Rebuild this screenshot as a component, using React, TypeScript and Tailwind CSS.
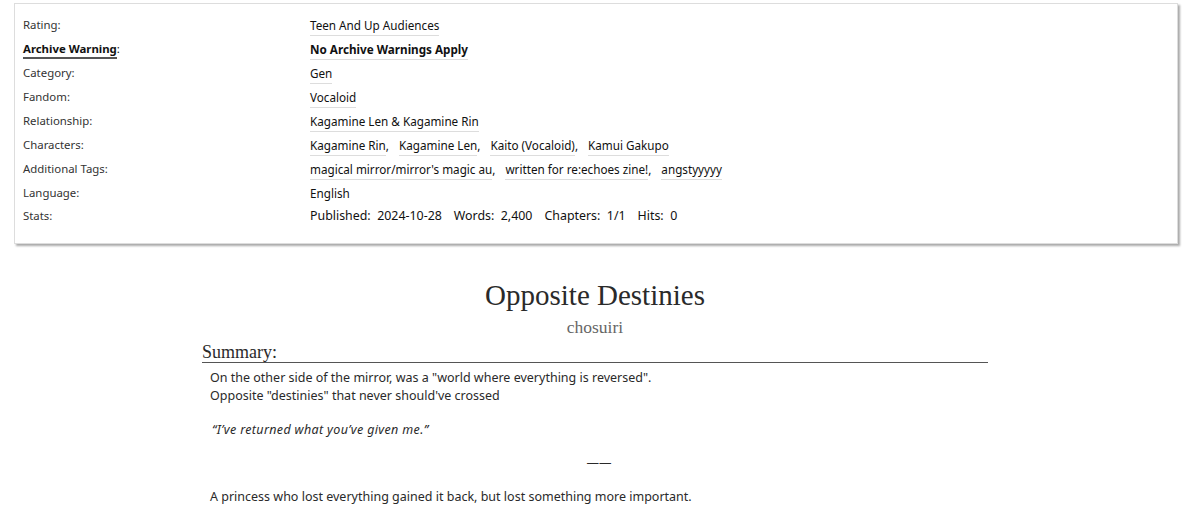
import React from 'react';

const sans = { fontFamily: '"Noto Sans", "DejaVu Sans", Verdana, sans-serif' };
const serif = { fontFamily: '"Liberation Serif", Georgia, serif' };

type Row = { label: string; values?: string[]; bold?: boolean; plain?: string };

const rows: Row[] = [
  { label: 'Rating', values: ['Teen And Up Audiences'] },
  { label: 'Archive Warning', values: ['No Archive Warnings Apply'], bold: true },
  { label: 'Category', values: ['Gen'] },
  { label: 'Fandom', values: ['Vocaloid'] },
  { label: 'Relationship', values: ['Kagamine Len & Kagamine Rin'] },
  { label: 'Characters', values: ['Kagamine Rin', 'Kagamine Len', 'Kaito (Vocaloid)', 'Kamui Gakupo'] },
  { label: 'Additional Tags', values: ["magical mirror/mirror's magic au", 'written for re:echoes zine!', 'angstyyyyy'] },
  { label: 'Language', plain: 'English' },
];

function Tag({ text, last, bold }: { text: string; last: boolean; bold?: boolean }) {
  return (
    <span className="mr-[10px] inline-block">
      <span className={`border-b border-[#ddd] pb-[2px] ${bold ? 'font-bold' : ''}`}>{text}</span>
      {!last && ','}
    </span>
  );
}

export default function App() {
  return (
    <div className="min-h-[514px] bg-white text-[#2a2a2a]" style={sans}>
      <div className="pt-[3px] pl-[14px] w-[1178px]">
        <div className="border border-[#ddd] bg-white shadow-[2px_2px_2px_#aaa] pl-[8px] pt-[12px] pb-[16px]">
          {rows.map((r) => (
            <div key={r.label} className="grid grid-cols-[287px_1fr] h-[24px] items-start text-[11.4px] leading-[18px]">
              <div className={r.bold ? 'font-bold text-[#111]' : 'text-[#333]'}>
                {r.bold ? (
                  <>
                    <span className="border-b-2 border-[#555] pb-[1px]">{r.label}</span>
                    <span className="font-normal">:</span>
                  </>
                ) : (
                  `${r.label}:`
                )}
              </div>
              <div className="text-[11.7px] text-[#111]">
                {r.values
                  ? r.values.map((v, i) => <Tag key={v} text={v} last={i === r.values!.length - 1} bold={r.bold} />)
                  : r.plain}
              </div>
            </div>
          ))}
          <div className="grid grid-cols-[287px_1fr] h-[20px] text-[11.4px] leading-[18px] -mt-[1px]">
            <div className="text-[#333]">Stats:</div>
            <div className="text-[12.4px] text-[#111]">
              <span className="mr-[12px]">Published:&nbsp; 2024-10-28</span>
              <span className="mr-[12px]">Words:&nbsp; 2,400</span>
              <span className="mr-[12px]">Chapters:&nbsp; 1/1</span>
              <span>Hits:&nbsp; 0</span>
            </div>
          </div>
        </div>
      </div>

      <div className="ml-[202px] w-[786px] pt-[34px]">
        <h2 className="text-center text-[29px] leading-[34px] text-[#2a2a2a]" style={serif}>
          Opposite Destinies
        </h2>
        <div className="text-center text-[17.5px] leading-[22px] mt-[4px] text-[#666]" style={serif}>
          chosuiri
        </div>
        <div className="border-b border-[#555] text-[18px] leading-[20px] mt-[4px] text-[#2a2a2a]" style={serif}>
          Summary:
        </div>
        <div className="pl-[8px] pt-[6px] text-[12.5px] leading-[18px] text-[#2a2a2a]">
          <p>On the other side of the mirror, was a "world where everything is reversed".</p>
          <p>Opposite "destinies" that never should've crossed</p>
          <p className="italic mt-[16px] pl-[2px] tracking-[0.35px]">“I’ve returned what you’ve given me.”</p>
          <p className="text-center mt-[15px]">——</p>
          <p className="mt-[16px]">A princess who lost everything gained it back, but lost something more important.</p>
        </div>
      </div>
    </div>
  );
}
